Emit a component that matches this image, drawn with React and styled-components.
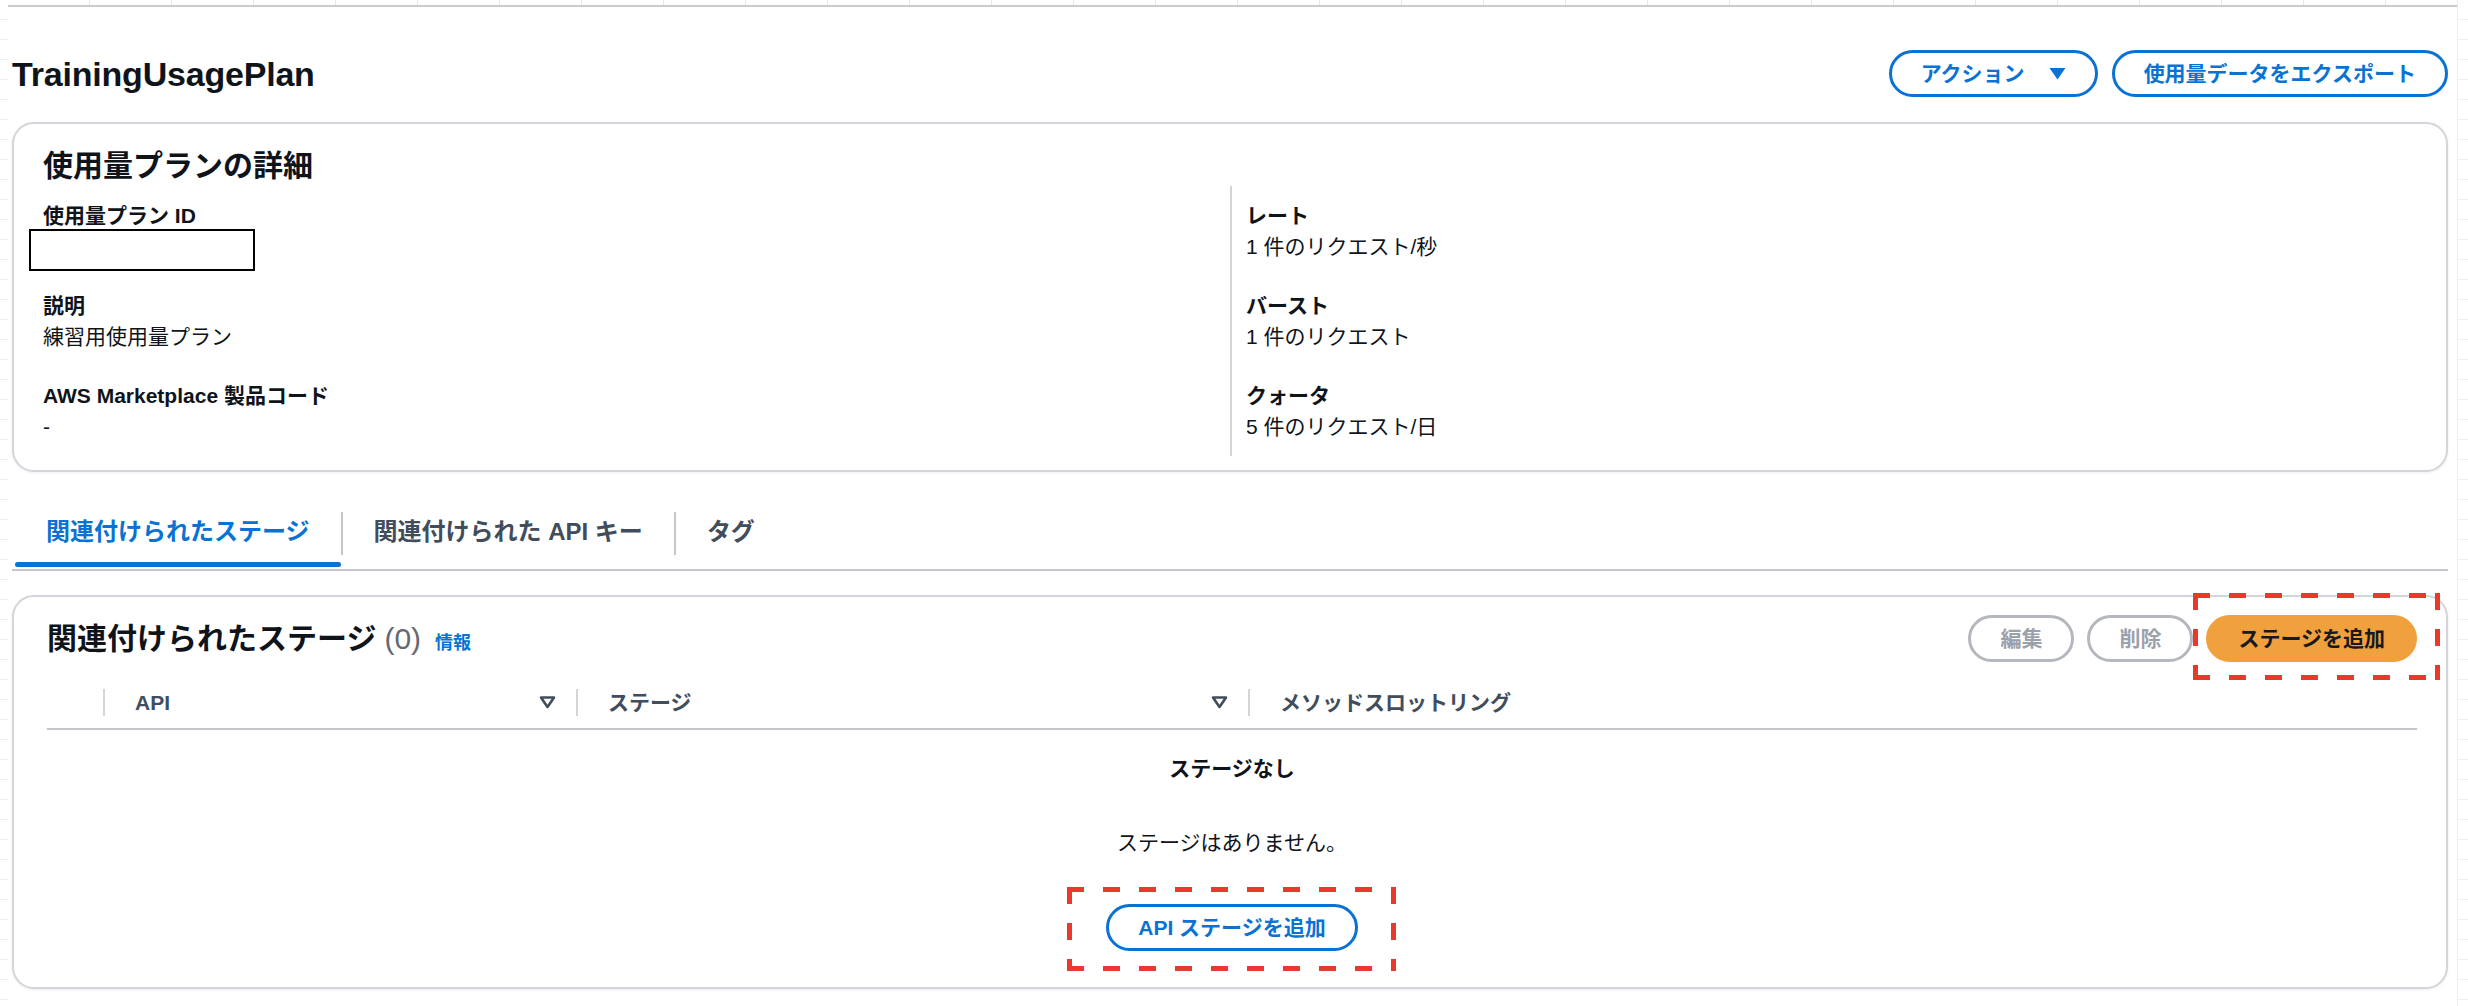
import React from 'react'
import styled, { createGlobalStyle } from 'styled-components'

const GlobalStyle = createGlobalStyle`
  html, body {
    margin: 0;
    padding: 0;
    background: #ffffff;
  }
  body {
    font-family: "Liberation Sans", "Noto Sans CJK JP", sans-serif;
    color: #0f141a;
  }
  * {
    box-sizing: border-box;
  }
`

const Page = styled.div`
  display: grid;
  grid-template-columns: 8px 1fr 11px;
  width: 2468px;
  min-height: 1006px;
`

const EdgeStrip = styled.div`
  background-image: repeating-linear-gradient(to bottom, transparent 0 19px, #efeff1 19px 20px);
  border-left: ${({ side }) => (side === 'right' ? '1px solid #ececef' : 'none')};
`

const Main = styled.main`
  padding: 0 9px 16px 4px;
`

const Ruler = styled.div`
  height: 7px;
  margin: 0 -9px 0 -4px;
  border-bottom: 2px solid #cbcbcf;
  background-image: repeating-linear-gradient(to right, transparent 0 81px, #e6e6e9 81px 82px);
`

const PageHeader = styled.header`
  display: flex;
  align-items: center;
  justify-content: space-between;
  height: 47px;
  margin-top: 43px;
`

const Title = styled.h1`
  margin: 0;
  font-size: 34px;
  font-weight: 700;
  line-height: 40px;
  letter-spacing: -0.2px;
`

const Actions = styled.div`
  display: flex;
  align-items: center;
  gap: ${({ gap }) => gap || 14}px;
`

const palette = {
  normal: { border: '#0972d3', bg: '#ffffff', color: '#0972d3' },
  disabled: { border: '#b4b7bd', bg: '#ffffff', color: '#9ba1aa' },
  primary: { border: '#f0a03c', bg: '#f0a03c', color: '#16191f' },
}

const Button = styled.button`
  display: inline-flex;
  align-items: center;
  gap: 24px;
  height: 47px;
  padding: 0 29px;
  border-radius: 24px;
  border: 3px solid ${({ variant }) => palette[variant || 'normal'].border};
  background: ${({ variant }) => palette[variant || 'normal'].bg};
  color: ${({ variant }) => palette[variant || 'normal'].color};
  font-family: inherit;
  font-size: 21px;
  font-weight: 700;
  line-height: 30px;
  white-space: nowrap;
  cursor: ${({ variant }) => (variant === 'disabled' ? 'default' : 'pointer')};
`

// red hand-drawn style dashed frame laid over a button
const dashH = 'repeating-linear-gradient(90deg, #e8392b 0 17px, transparent 17px 36px)'
const dashV = 'repeating-linear-gradient(180deg, #e8392b 0 17px, transparent 17px 36px)'

const Annotated = styled.span`
  position: relative;
  display: inline-flex;

  &::after {
    content: '';
    position: absolute;
    top: ${({ t }) => t}px;
    left: ${({ l }) => l}px;
    right: ${({ r }) => r}px;
    bottom: ${({ b }) => b}px;
    background:
      ${dashH} top left / 100% 5px no-repeat,
      ${dashH} bottom left / 100% 5px no-repeat,
      ${dashV} top left / 5px 100% no-repeat,
      ${dashV} top right / 5px 100% no-repeat;
    pointer-events: none;
  }
`

const Card = styled.section`
  margin-top: ${({ top }) => top}px;
  padding: ${({ pad }) => pad};
  border: 2px solid #d3d5da;
  border-radius: 22px;
  background: #ffffff;
  box-shadow: 0 1px 3px rgba(0, 7, 22, 0.07);
`

const CardTitle = styled.h2`
  margin: 0;
  font-size: 30px;
  font-weight: 700;
  line-height: 36px;
`

const DetailsGrid = styled.div`
  display: grid;
  grid-template-columns: 1fr 1fr;
  margin-top: 2px;
`

const Column = styled.div`
  display: flex;
  flex-direction: column;
  gap: 28px;
  padding: 14px 0 14px ${({ divided }) => (divided ? 14 : 0)}px;
  border-left: ${({ divided }) => (divided ? '2px solid #d3d5da' : 'none')};
`

const Pair = styled.div`
  display: flex;
  flex-direction: column;
`

const Label = styled.div`
  font-size: 21px;
  font-weight: 700;
  line-height: 31px;
`

const Value = styled.div`
  position: relative;
  min-height: 31px;
  font-size: 21px;
  line-height: 31px;
`

const Redacted = styled.span`
  position: absolute;
  top: -2px;
  left: -14px;
  width: 226px;
  height: 42px;
  border: 2px solid #000000;
  background: #ffffff;
`

const Tabs = styled.nav`
  display: flex;
  align-items: flex-start;
  margin-top: 33px;
  padding-left: 3px;
  border-bottom: 2px solid #c6c6cd;
`

const Tab = styled.div`
  position: relative;
  padding: 12px 31px 22px;
  font-size: 24px;
  font-weight: 700;
  line-height: 30px;
  white-space: nowrap;
  color: ${({ active }) => (active ? '#0972d3' : '#414d5c')};

  &::after {
    content: '';
    display: ${({ active }) => (active ? 'block' : 'none')};
    position: absolute;
    left: 0;
    right: 0;
    bottom: 2px;
    height: 5px;
    border-radius: 3px;
    background: #0972d3;
  }
`

const TabDivider = styled.span`
  width: 2px;
  height: 43px;
  margin-top: 7px;
  background: #c6c6cd;
`

const CardHeader = styled.div`
  display: flex;
  align-items: center;
  justify-content: space-between;
  height: 47px;
`

const HeadingGroup = styled.div`
  display: flex;
  align-items: baseline;
  gap: 8px;
`

const Count = styled.span`
  font-size: 30px;
  font-weight: 400;
  line-height: 36px;
  color: #656871;
`

const InfoLink = styled.a`
  margin-left: 6px;
  font-size: 18px;
  font-weight: 700;
  color: #0972d3;
  text-decoration: none;
`

const TableHead = styled.div`
  display: grid;
  grid-template-columns: 56px 473px 672px 1fr;
  align-items: center;
  height: 54px;
  margin-top: 14px;
  border-bottom: 2px solid #c6c6cd;
`

const HeadCell = styled.div`
  display: flex;
  align-items: center;
  justify-content: space-between;
  height: 27px;
  padding: 0 20px 0 30px;
  border-left: 2px solid #d3d5da;
  font-size: 21px;
  font-weight: 700;
  line-height: 27px;
  color: #414d5c;
`

const Empty = styled.div`
  display: flex;
  flex-direction: column;
  align-items: center;
  padding-top: 23px;
`

const EmptyTitle = styled.div`
  font-size: 21px;
  font-weight: 700;
  line-height: 31px;
`

const EmptyText = styled.div`
  margin: 43px 0 46px;
  font-size: 21px;
  line-height: 31px;
`

const SortIcon = () => (
  <svg width="17" height="14" viewBox="0 0 17 14">
    <path d="M2 2.5 H15 L8.5 12 Z" fill="none" stroke="#414d5c" strokeWidth="2.6" strokeLinejoin="round" />
  </svg>
)

const CaretDown = () => (
  <svg width="17" height="13" viewBox="0 0 17 13">
    <path d="M0.5 1 H16.5 L8.5 12.5 Z" fill="#0972d3" />
  </svg>
)

const leftDetails = [
  { label: '使用量プラン ID', value: null },
  { label: '説明', value: '練習用使用量プラン' },
  { label: 'AWS Marketplace 製品コード', value: '-' },
]

const rightDetails = [
  { label: 'レート', value: '1 件のリクエスト/秒' },
  { label: 'バースト', value: '1 件のリクエスト' },
  { label: 'クォータ', value: '5 件のリクエスト/日' },
]

const columns = ['API', 'ステージ', 'メソッドスロットリング']

const tabs = ['関連付けられたステージ', '関連付けられた API キー', 'タグ']

const DetailColumn = ({ items, divided }) => (
  <Column divided={divided}>
    {items.map(({ label, value }) => (
      <Pair key={label}>
        <Label>{label}</Label>
        <Value>{value === null ? <Redacted /> : value}</Value>
      </Pair>
    ))}
  </Column>
)

const App = () => {
  return (
    <>
      <GlobalStyle />
      <Page>
        <EdgeStrip side="left" />
        <Main>
          <Ruler />
          <PageHeader>
            <Title>TrainingUsagePlan</Title>
            <Actions>
              <Button>
                アクション
                <CaretDown />
              </Button>
              <Button>使用量データをエクスポート</Button>
            </Actions>
          </PageHeader>

          <Card top={25} pad="24px 29px 14px">
            <CardTitle>使用量プランの詳細</CardTitle>
            <DetailsGrid>
              <DetailColumn items={leftDetails} />
              <DetailColumn items={rightDetails} divided />
            </DetailsGrid>
          </Card>

          <Tabs>
            {tabs.map((t, i) => (
              <React.Fragment key={t}>
                {i > 0 && <TabDivider />}
                <Tab active={i === 0}>{t}</Tab>
              </React.Fragment>
            ))}
          </Tabs>

          <Card top={24} pad="18px 29px 36px 33px">
            <CardHeader>
              <HeadingGroup>
                <CardTitle>関連付けられたステージ</CardTitle>
                <Count>(0)</Count>
                <InfoLink href="#">情報</InfoLink>
              </HeadingGroup>
              <Actions gap={13}>
                <Button variant="disabled">編集</Button>
                <Button variant="disabled">削除</Button>
                <Annotated t={-22} l={-13} r={-23} b={-18}>
                  <Button variant="primary">ステージを追加</Button>
                </Annotated>
              </Actions>
            </CardHeader>

            <TableHead>
              <span />
              {columns.map((c, i) => (
                <HeadCell key={c}>
                  {c}
                  {i < 2 && <SortIcon />}
                </HeadCell>
              ))}
            </TableHead>

            <Empty>
              <EmptyTitle>ステージなし</EmptyTitle>
              <EmptyText>ステージはありません。</EmptyText>
              <Annotated t={-17} l={-39} r={-38} b={-20}>
                <Button>API ステージを追加</Button>
              </Annotated>
            </Empty>
          </Card>
        </Main>
        <EdgeStrip side="right" />
      </Page>
    </>
  )
}

export default App
